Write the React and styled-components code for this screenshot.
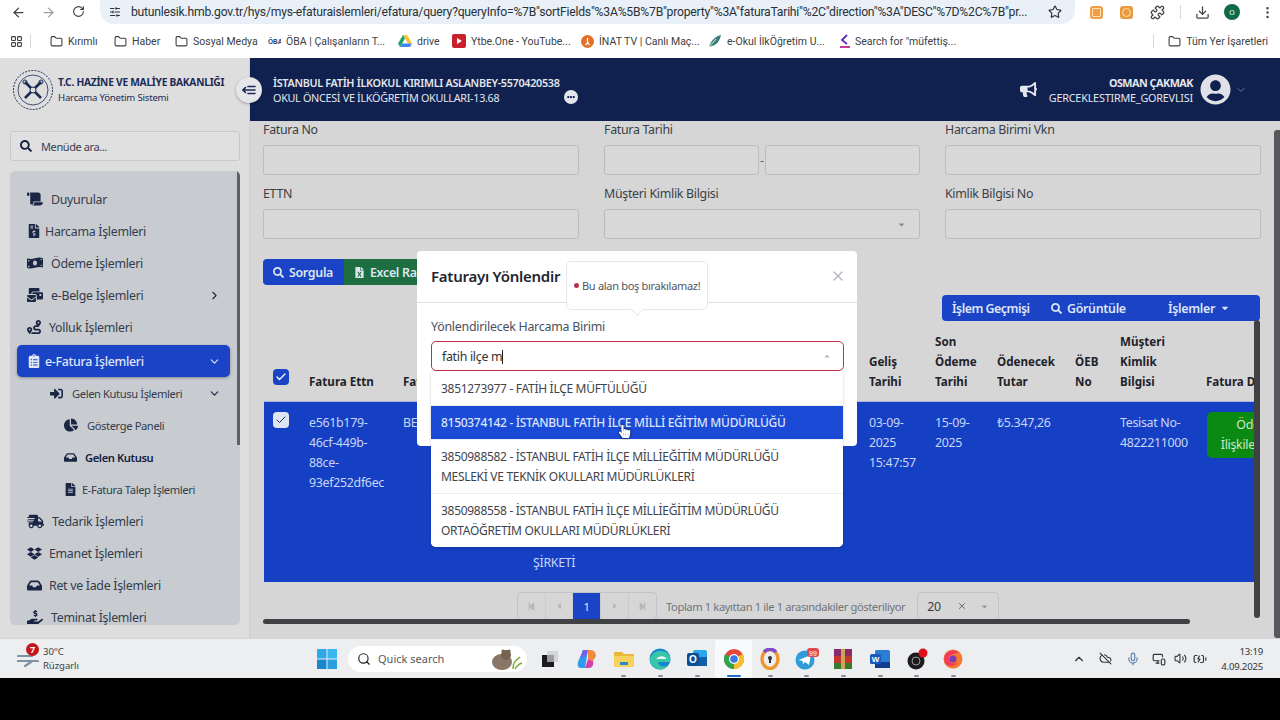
import React from "react";
import styled, { createGlobalStyle } from "styled-components";
import {
  FaScroll, FaFileInvoiceDollar, FaMoneyBillWave, FaMailBulk, FaRoute, FaClipboardList, FaSignInAlt,
  FaChartPie, FaInbox, FaFileAlt, FaShippingFast, FaDropbox, FaHandHoldingUsd, FaBullhorn, FaUserCircle,
  FaSearch, FaFileExcel, FaEllipsisH, FaStepBackward, FaStepForward, FaCaretLeft, FaCaretRight,
  FaCaretDown, FaCaretUp, FaHandPointer,
} from "react-icons/fa";
import {
  ArrowLeft, ArrowRight, RotateCw, Star, Puzzle, Download, EllipsisVertical, Folder, LayoutGrid,
  SlidersHorizontal, ChevronRight, ChevronDown, ChevronUp, X, Search, Mic, Volume2, CloudOff, MonitorSmartphone,
  BatteryCharging, Check as CheckMark,
} from "lucide-react";

const APP_FONT = `"Noto Sans", "Liberation Sans", sans-serif`;
const CHROME_FONT = `Roboto, "Liberation Sans", sans-serif`;

const GlobalStyle = createGlobalStyle`
  html, body { margin: 0; padding: 0; background: #000; }
  * { box-sizing: border-box; }
  body { font-family: ${APP_FONT}; }
`;

const Page = styled.div`
  width: 1280px;
  height: 720px;
  overflow: hidden;
  display: flex;
  flex-direction: column;
  background: #000;
`;

/* browser chrome */
const Toolbar = styled.div`
  height: 24px;
  background: #fff;
  display: flex;
  align-items: center;
  color: #444;
  font-family: ${CHROME_FONT};
`;

const NavButton = styled.div`
  width: 30px;
  display: flex;
  justify-content: center;
  color: ${p => (p.$off ? "#9aa0a6" : "#3c4043")};
`;

const Nav = styled.div`
  display: flex;
  padding-left: 3px;
  width: 100px;
`;

const UrlBar = styled.div`
  width: 975px;
  height: 24px;
  background: #e9f0f8;
  border-radius: 0 0 14px 14px;
  display: flex;
  align-items: center;
  padding: 0 13px 0 7px;
  gap: 9px;
  font-size: 12.2px;
  color: #2b3138;
`;

const UrlSite = styled.div`
  width: 15px;
  display: flex;
  justify-content: center;
`;

const UrlText = styled.div`
  flex: 1;
  white-space: nowrap;
  overflow: hidden;
  letter-spacing: -0.23px;
`;

const ToolIcons = styled.div`
  flex: 1;
  display: flex;
  align-items: center;
  padding-left: 15px;
`;

const ExtIcon = styled.div`
  width: 13px;
  height: 13px;
  border-radius: 3px;
  background: ${p => p.$color};
  margin-right: 17px;
  display: flex;
  align-items: center;
  justify-content: center;
  &::after {
    content: "";
    width: 7px;
    height: 7px;
    border-radius: ${p => (p.$round ? "50%" : "1px")};
    border: 1px solid #fbe3c4;
  }
`;

const ToolSep = styled.div`
  width: 1px;
  height: 14px;
  background: #d5d8dc;
  margin: 0 14px 0 15px;
`;

const Avatar = styled.div`
  width: 16px;
  height: 16px;
  border-radius: 50%;
  background: #0f6b45;
  color: #dff;
  font-size: 8px;
  display: flex;
  align-items: center;
  justify-content: center;
  margin: 0 20px 0 14px;
`;

const Bookmarks = styled.div`
  height: 34px;
  background: #fff;
  display: flex;
  align-items: center;
  padding-left: 10px;
  font-family: ${CHROME_FONT};
  font-size: 10.5px;
  color: #3c4043;
`;

const Mark = styled.div`
  display: flex;
  align-items: center;
  gap: 5px;
  width: ${p => p.$w}px;
  flex: none;
  white-space: nowrap;
`;

const BookmarkSep = styled.div`
  width: 1px;
  height: 14px;
  background: #d5d8dc;
  margin: 0 ${p => p.$right}px 0 ${p => p.$left}px;
`;

const BookmarkEnd = styled(Mark)`
  margin-left: auto;
  margin-right: 12px;
  width: auto;
`;

/* application */
const Body = styled.div`
  position: relative;
  height: 580px;
  display: flex;
  background: #d6d6d6;
  overflow: hidden;
`;

const Sidebar = styled.aside`
  width: 250px;
  flex: none;
  background: #dedede;
  display: flex;
  flex-direction: column;
  border-right: 1px solid #cfcfcf;
`;

const Brand = styled.div`
  height: 63px;
  padding: 11px 0 0 12px;
  display: flex;
  gap: 4px;
`;

const BrandText = styled.div`
  padding-top: 5px;
  color: #1b2a55;
`;

const BrandTitle = styled.div`
  font-size: 10.2px;
  font-weight: 700;
  line-height: 16px;
  white-space: nowrap;
  letter-spacing: -0.25px;
`;

const BrandSub = styled.div`
  font-size: 9.6px;
  line-height: 15px;
  letter-spacing: -0.2px;
`;

const MenuSearch = styled.div`
  margin: 10px 9px 10px 10px;
  height: 30px;
  border: 1px solid #c5c8cc;
  border-radius: 3px;
  display: flex;
  align-items: center;
  gap: 9px;
  padding-left: 9px;
  font-size: 11px;
  letter-spacing: -0.4px;
  color: #39414f;
  background: #e0e0e0;
`;

const MenuCard = styled.nav`
  position: relative;
  margin: 0 9px 0 10px;
  height: 454px;
  background: #c8ccd1;
  border-radius: 5px;
  padding-top: 12px;
  overflow: hidden;
`;

const MenuThumb = styled.div`
  position: absolute;
  top: 0;
  right: 0;
  width: 3px;
  height: 274px;
  background: #5d6167;
`;

const MenuItem = styled.div`
  height: 32px;
  display: flex;
  align-items: center;
  gap: ${p => p.$gap}px;
  margin: ${p => (p.$active ? "2px 10px 0 7px" : "0 10px 0 7px")};
  padding: 0 9px 0 ${p => 10 + p.$level * 14 + (p.$level ? 9 : 0)}px;
  border-radius: 5px;
  font-size: 12.4px;
  letter-spacing: -0.3px;
  font-weight: ${p => (p.$active ? 500 : p.$bold ? 600 : 400)};
  color: ${p => (p.$active ? "#dfe6f7" : p.$bold ? "#14203f" : "#333c4c")};
  background: ${p => (p.$active ? "#1a43c6" : "transparent")};
  box-shadow: ${p => (p.$active ? "0 1px 3px rgba(0,0,0,.35)" : "none")};
  white-space: nowrap;
  svg { flex: none; color: ${p => (p.$active ? "#dfe6f7" : "#1b2645")}; }
`;

const MenuChevron = styled.span`
  margin-left: auto;
  display: flex;
`;

const SmallLabel = styled.span`
  font-size: ${p => (p.$small ? "11.2px" : "inherit")};
  letter-spacing: ${p => (p.$small ? "-0.4px" : "inherit")};
`;

const Content = styled.main`
  position: relative;
  flex: 1;
  min-width: 0;
  display: flex;
  flex-direction: column;
`;

const TopBar = styled.header`
  height: 63px;
  flex: none;
  background: #10214f;
  display: flex;
  align-items: center;
  padding: 0 33px 0 23px;
  color: #e3e6ec;
`;

const Unit = styled.div`
  flex: 1;
  font-size: 10.8px;
  line-height: 15px;
  letter-spacing: -0.3px;
`;

const UnitLine = styled.div`
  display: flex;
  align-items: center;
  font-weight: ${p => (p.$bold ? 600 : 400)};
`;

const DotsBadge = styled.span`
  position: absolute;
  left: 314px;
  top: 32px;
  width: 14px;
  height: 14px;
  border-radius: 50%;
  background: #e3e6ec;
  color: #10214f;
  display: flex;
  align-items: center;
  justify-content: center;
`;

const UserBlock = styled.div`
  text-align: right;
  font-size: 10.8px;
  line-height: 15px;
  margin: 0 7px 0 6px;
  width: 150px;
  letter-spacing: -0.2px;
`;

const UserName = styled.div`
  font-weight: 700;
  letter-spacing: -0.5px;
`;

const Inner = styled.div`
  padding: 1px 20px 0 13px;
  font-size: 12.4px;
  letter-spacing: -0.3px;
  color: #3a3f47;
`;

const FilterGrid = styled.div`
  display: grid;
  grid-template-columns: repeat(3, 316px);
  column-gap: 25px;
  row-gap: 11px;
`;

const Field = styled.div``;

const FieldLabel = styled.div`
  height: 16px;
  line-height: 16px;
  margin-bottom: 7px;
  white-space: nowrap;
`;

const Input = styled.div`
  height: 30px;
  border: 1px solid #b9bcc0;
  border-radius: 3px;
  background: #d8d8d8;
  display: flex;
  align-items: center;
  justify-content: flex-end;
  padding-right: 13px;
  color: #8a8a8a;
`;

const DateRange = styled.div`
  display: flex;
  align-items: center;
  gap: 1px;
  color: #666;
  ${Input} { width: 155px; }
`;

const ActionRow = styled.div`
  display: flex;
  margin-top: 20px;
`;

const Button = styled.div`
  height: 26px;
  width: ${p => p.$w}px;
  background: ${p => p.$color};
  border-radius: ${p => p.$radius};
  color: #dfe6f2;
  font-weight: 600;
  display: flex;
  align-items: center;
  gap: 5px;
  padding-left: 10px;
  white-space: nowrap;
  overflow: hidden;
`;

const RecordTools = styled.div`
  width: 318px;
  height: 26px;
  margin: 10px 0 0 auto;
  background: #1a43c6;
  border-radius: 4px;
  display: flex;
  align-items: center;
  color: #dfe6f7;
  font-weight: 600;
`;

const RecordTool = styled.div`
  display: flex;
  align-items: center;
  gap: 5px;
  width: ${p => p.$w}px;
  padding-left: ${p => p.$pad}px;
  white-space: nowrap;
  letter-spacing: ${p => (p.$tight ? "-0.5px" : "inherit")};
`;

const TableScroll = styled.div`
  width: 991px;
  margin-top: 10px;
  margin-left: 1px;
  overflow: hidden;
`;

const Row = styled.div`
  display: grid;
  grid-template-columns: 35px 94px 130px 336px 66px 62px 78px 45px 86px 58px;
  line-height: 20px;
`;

const HeadRow = styled(Row)`
  height: 71px;
  color: #1e232b;
  font-weight: 700;
  font-size: 11.6px;
  letter-spacing: 0;
  border-bottom: 1px solid #a9b8dc;
`;

const BodyRow = styled(Row)`
  height: 180px;
  background: #1540c4;
  color: #c9d6f5;
`;

const HeadCell = styled.div`
  align-self: end;
  padding: 0 0 ${p => (p.$check ? 16 : 9)}px ${p => (p.$check ? 9 : 10)}px;
  white-space: ${p => (p.$nowrap ? "nowrap" : "normal")};
`;

const BodyCell = styled.div`
  padding: ${p => (p.$check ? "10px 0 0 9px" : "11px 0 0 10px")};
  white-space: pre-line;
  ${p => p.$end && "align-self: end; padding: 0 0 9px 10px;"}
  min-width: 0;
`;

const Check = styled.div`
  width: 16px;
  height: 16px;
  border-radius: 4px;
  background: ${p => (p.$light ? "#dfe4f3" : "#1a43c6")};
  color: ${p => (p.$light ? "#1a2a66" : "#fff")};
  display: flex;
  align-items: center;
  justify-content: center;
`;

const StatusPill = styled.div`
  width: 100px;
  height: 46px;
  margin: -1px 0 0 1px;
  background: #0a8a12;
  border-radius: 5px;
  color: #cfe8cf;
  text-align: center;
  padding: 3px 0;
  white-space: nowrap;
`;

const Pager = styled.div`
  display: flex;
  align-items: center;
  margin: 10px 0 0 254px;
  font-size: 11.2px;
  letter-spacing: -0.4px;
  color: #70757c;
  white-space: nowrap;
`;

const PagerGroup = styled.div`
  display: flex;
  height: 28px;
  border: 1px solid #c2c4c7;
  border-radius: 4px;
  overflow: hidden;
  margin-right: 9px;
`;

const PagerCell = styled.div`
  width: ${p => (p.$narrow ? 27 : 28)}px;
  display: flex;
  align-items: center;
  justify-content: center;
  color: ${p => (p.$active ? "#e8edf9" : "#b5b7ba")};
  background: ${p => (p.$active ? "#1a43c6" : "transparent")};
  border-left: ${p => (p.$first ? "none" : "1px solid #c9cbce")};
`;

const PageSize = styled.div`
  width: 82px;
  height: 28px;
  margin-left: 12px;
  border: 1px solid #c2c4c7;
  border-radius: 4px;
  display: flex;
  align-items: center;
  padding-left: 9px;
  font-size: 12.4px;
  color: #3a3f47;
`;

const SizeClear = styled.span`
  margin-left: 16px;
  display: flex;
  color: #555;
`;

const SizeCaret = styled.span`
  margin-left: 13px;
  display: flex;
  color: #999;
`;

const HScroll = styled.div`
  position: absolute;
  left: 13px;
  top: 561px;
  width: 927px;
  height: 5px;
  background: #3f4145;
  border-radius: 3px;
`;

const VScroll = styled.div`
  position: absolute;
  left: 1004px;
  top: 262px;
  width: 6px;
  height: 298px;
  background: #3f4145;
  border-radius: 3px;
`;

const PageThumb = styled.div`
  position: absolute;
  right: 0;
  top: 72px;
  width: 6px;
  bottom: 0;
  background: #55585c;
  border-radius: 3px 0 0 3px;
`;

const SideToggle = styled.div`
  position: absolute;
  left: 236px;
  top: 19px;
  width: 26px;
  height: 26px;
  border-radius: 50%;
  background: #e4e6ea;
  box-shadow: 0 1px 3px rgba(0, 0, 0, 0.3);
  display: flex;
  align-items: center;
  justify-content: center;
  color: #1b2a55;
`;

/* dialog */
const Dialog = styled.div`
  position: absolute;
  left: 417px;
  top: 193px;
  width: 440px;
  height: 195px;
  background: #fff;
  border-radius: 4px;
`;

const DialogHead = styled.div`
  height: 52px;
  border-bottom: 1px solid #dde0e5;
  display: flex;
  align-items: center;
  justify-content: space-between;
  padding: 0 11px 2px 14px;
  font-size: 15px;
  letter-spacing: -0.25px;
  font-weight: 600;
  color: #1f2530;
`;

const DialogBody = styled.div`
  padding: 15px 13px 0 14px;
  font-size: 12.4px;
  color: #4a505a;
`;

const SelectLabel = styled.div`
  line-height: 18px;
  margin-bottom: 5px;
  letter-spacing: -0.25px;
`;

const Select = styled.div`
  height: 30px;
  border: 1px solid #c22f47;
  border-radius: 5px;
  display: flex;
  align-items: center;
  justify-content: space-between;
  padding: 0 12px 0 10px;
  color: #333;
  letter-spacing: -0.3px;
`;

const Caret = styled.span`
  width: 1px;
  height: 14px;
  background: #222;
  display: inline-block;
  vertical-align: middle;
`;

const Popover = styled.div`
  position: absolute;
  left: 149px;
  top: 10px;
  width: 142px;
  height: 49px;
  background: #fff;
  border: 1px solid #e6e8ec;
  border-radius: 5px;
  display: flex;
  align-items: center;
  gap: 3px;
  padding: 0 0 0 7px;
  font-size: 11px;
  color: #50555e;
  white-space: nowrap;
  letter-spacing: -0.3px;
  &::after {
    content: "";
    position: absolute;
    left: 66px;
    bottom: -5px;
    width: 8px;
    height: 8px;
    background: #fff;
    transform: rotate(45deg);
    border-right: 1px solid #e6e8ec;
    border-bottom: 1px solid #e6e8ec;
  }
`;

const ErrorDot = styled.span`
  width: 5px;
  height: 5px;
  border-radius: 50%;
  background: #b4344a;
  flex: none;
`;

const Options = styled.div`
  position: absolute;
  left: 14px;
  top: 120px;
  width: 412px;
  background: #fff;
  border-radius: 0 0 5px 5px;
  box-shadow: 0 1px 3px rgba(0, 0, 0, 0.2);
  font-size: 12px;
  letter-spacing: -0.3px;
  line-height: 20px;
  overflow: hidden;
`;

const Option = styled.div`
  padding: 7px 10px;
  height: ${p => p.$h}px;
  background: ${p => (p.$active ? "#1a4ad6" : "#fff")};
  color: ${p => (p.$active ? "#dbe4fa" : "#3f444c")};
  font-weight: ${p => (p.$active ? 500 : 400)};
  border-bottom: 1px solid #eceef0;
  white-space: pre-line;
  &:first-child { padding-top: 8px; }
  &:last-child { border-bottom: none; }
`;

const Pointer = styled.div`
  position: absolute;
  left: 618px;
  top: 367px;
  color: #fff;
  filter: drop-shadow(0 0 1px #000);
  display: flex;
`;

/* taskbar */
const Taskbar = styled.div`
  height: 40px;
  background: #eceef0;
  border-top: 1px solid #d5d6d8;
  display: flex;
  align-items: center;
  color: #3c3f44;
`;

const Weather = styled.div`
  width: 316px;
  display: flex;
  align-items: center;
  padding-left: 17px;
  gap: 4px;
  position: relative;
`;

const WeatherText = styled.div`
  font-size: 9.6px;
  line-height: 14px;
  letter-spacing: -0.1px;
`;

const WeatherBadge = styled.span`
  position: absolute;
  left: 26px;
  top: -2px;
  width: 13px;
  height: 13px;
  border-radius: 50%;
  background: #c5161c;
  color: #fff;
  font-size: 9px;
  font-weight: 700;
  display: flex;
  align-items: center;
  justify-content: center;
`;

const TaskIcon = styled.div`
  position: relative;
  width: ${p => p.$w || 36.6}px;
  height: 38px;
  display: flex;
  align-items: center;
  justify-content: center;
  background: ${p => (p.$active ? "#f9fafb" : "transparent")};
  border-radius: 3px;
  &::after {
    content: "";
    display: ${p => (p.$open ? "block" : "none")};
    position: absolute;
    bottom: 1px;
    left: 50%;
    width: ${p => (p.$active ? 14 : 5)}px;
    height: 2px;
    margin-left: ${p => (p.$active ? -7 : -2.5)}px;
    border-radius: 1px;
    background: ${p => (p.$active ? "#1f6fc4" : "#8a8d91")};
  }
`;

const TaskSearch = styled.div`
  width: 179px;
  height: 26px;
  margin: 0 3px 0 10px;
  background: #fff;
  border-radius: 13px;
  display: flex;
  align-items: center;
  gap: 7px;
  padding-left: 9px;
  font-size: 11px;
  color: #55585c;
`;

const SearchArt = styled.span`
  margin-left: auto;
  margin-right: 4px;
  display: flex;
`;

const Tray = styled.div`
  margin-left: auto;
  display: flex;
  align-items: center;
  color: #33363a;
`;

const TraySlot = styled.div`
  width: ${p => p.$w}px;
  display: flex;
  justify-content: center;
`;

const Clock = styled.div`
  width: 47px;
  margin: 0 17px 0 6px;
  text-align: right;
  font-size: 9.6px;
  line-height: 15px;
  letter-spacing: -0.2px;
`;

const BottomBlack = styled.div`
  flex: 1;
  background: #000;
`;

/* drawings */
const Emblem = () => (
  <svg width="42" height="42" viewBox="0 0 42 42" fill="none" stroke="#1b2a55">
    <circle cx="21" cy="21" r="19.5" strokeWidth="1" strokeDasharray="2 1.2" />
    <circle cx="21" cy="21" r="15" strokeWidth="0.8" />
    <path d="M13 13 L29 29 M29 13 L13 29" strokeWidth="2.6" />
    <circle cx="21" cy="21" r="3" strokeWidth="1" fill="#dedede" />
    <circle cx="13" cy="13" r="2" strokeWidth="1" />
    <circle cx="29" cy="13" r="2" strokeWidth="1" />
  </svg>
);

const CollapseGlyph = () => (
  <svg width="14" height="12" viewBox="0 0 14 12" fill="none" stroke="currentColor" strokeWidth="1.6" strokeLinecap="round">
    <path d="M6 2.5h7M1 6h12M6 9.5h7M3.5 3.5 1 6l2.5 2.5" />
  </svg>
);

const WindowsLogo = () => (
  <svg width="20" height="20" viewBox="0 0 20 20">
    <rect x="0" y="0" width="9.5" height="9.5" fill="#2fa8e6" />
    <rect x="10.5" y="0" width="9.5" height="9.5" fill="#3cb6ee" />
    <rect x="0" y="10.5" width="9.5" height="9.5" fill="#1a86d0" />
    <rect x="10.5" y="10.5" width="9.5" height="9.5" fill="#2b9fe0" />
  </svg>
);

const Bear = () => (
  <svg width="34" height="22" viewBox="0 0 34 22">
    <ellipse cx="13" cy="14" rx="10" ry="8" fill="#8a7666" />
    <circle cx="17" cy="7" r="5" fill="#75624f" />
    <circle cx="14" cy="3" r="1.6" fill="#75624f" />
    <circle cx="20" cy="3" r="1.6" fill="#75624f" />
    <path d="M24 21 C24 14 27 12 31 9 M26 21 C28 17 30 16 33 15" stroke="#7fae3c" strokeWidth="1.5" fill="none" />
  </svg>
);

const WindowsApp = () => (
  <svg width="16" height="16" viewBox="0 0 16 16">
    <rect x="5" y="0" width="11" height="11" fill="#d4d5d7" />
    <rect x="0" y="4" width="12" height="12" fill="#1c1c1e" />
    <rect x="5" y="4" width="7" height="7" fill="#9b9c9e" />
  </svg>
);

const Copilot = () => (
  <svg width="20" height="20" viewBox="0 0 20 20">
    <path d="M6 1h5L8 19H4C1 19 0 16 1 13Z" fill="#2f9bf0" />
    <path d="M11 1h3c3 0 5 3 5 6l-3 5-5-2Z" fill="#f08a3c" />
    <path d="M8 19l3-9 5 2c1 4-1 7-4 7Z" fill="#d63fa8" />
    <path d="M6 1h5L9 7 4 9Z" fill="#7b5cf0" />
  </svg>
);

const FolderApp = () => (
  <svg width="22" height="20" viewBox="0 0 22 20">
    <path d="M1 3h8l2 2h10v13H1Z" fill="#e8b93a" />
    <rect x="1" y="7" width="20" height="11" fill="#f6d35c" />
    <rect x="7" y="13" width="8" height="3" fill="#2a88cf" />
  </svg>
);

const Edge = () => (
  <svg width="22" height="22" viewBox="0 0 22 22">
    <circle cx="11" cy="11" r="10.5" fill="#1b86d0" />
    <path d="M1 11C3 3 12 1 18 5c3 2 4 6 3 9H9c0 4 5 6 10 3-4 6-11 5-14 2-3-2-4-5-4-8Z" fill="#37c6a8" />
    <path d="M7 12c1-4 7-5 10-2v1H8Z" fill="#e8f6f4" />
  </svg>
);

const Outlook = () => (
  <svg width="22" height="20" viewBox="0 0 22 20">
    <rect x="7" y="1" width="14" height="15" rx="2" fill="#28a8ea" />
    <rect x="12" y="8" width="9" height="9" fill="#0f5ea8" />
    <rect x="1" y="4" width="12" height="13" rx="2" fill="#0a4f96" />
    <text x="7" y="14" textAnchor="middle" fontSize="10" fontWeight="700" fill="#fff" fontFamily="Liberation Sans">O</text>
  </svg>
);

const Chrome = () => (
  <svg width="20" height="20" viewBox="0 0 20 20">
    <circle cx="10" cy="10" r="10" fill="#e8483a" />
    <path d="M10 10 L1.3 5 A10 10 0 0 0 10 20 Z" fill="#2fa44f" />
    <path d="M10 10 L18.7 5 A10 10 0 0 1 10 20 Z" fill="#f3c02c" />
    <circle cx="10" cy="10" r="5" fill="#fff" />
    <circle cx="10" cy="10" r="3.8" fill="#3a78e8" />
  </svg>
);

const Opera = () => (
  <svg width="20" height="22" viewBox="0 0 20 22">
    <ellipse cx="10" cy="11" rx="8" ry="9.5" fill="none" stroke="#f0962e" strokeWidth="3.4" />
    <path d="M4 4C7 .5 13 .5 16 4" fill="none" stroke="#7e4bd0" strokeWidth="3.4" />
    <circle cx="10" cy="10" r="2" fill="#333" />
    <rect x="9" y="10" width="2" height="5" fill="#333" />
  </svg>
);

const Telegram = () => (
  <svg width="24" height="22" viewBox="0 0 24 22">
    <circle cx="10" cy="12" r="9.5" fill="#2f9bd8" />
    <path d="M3.5 12 16 7l-2 10-4-3-2 2-.5-3Z" fill="#fff" />
    <rect x="12" y="0" width="12" height="9" rx="3" fill="#e0474c" />
    <text x="18" y="7.5" textAnchor="middle" fontSize="7" fill="#fff" fontFamily="Liberation Sans">99</text>
  </svg>
);

const Winrar = () => (
  <svg width="18" height="20" viewBox="0 0 18 20">
    <rect width="18" height="7" fill="#8a2a6a" />
    <rect y="7" width="18" height="7" fill="#c2362e" />
    <rect y="14" width="18" height="6" fill="#3a7a2e" />
    <rect x="7" width="4" height="20" fill="#c9a35a" />
  </svg>
);

const Word = () => (
  <svg width="20" height="20" viewBox="0 0 20 20">
    <rect x="5" y="1" width="15" height="18" rx="1.5" fill="#2b7cd3" />
    <rect x="5" y="13" width="15" height="6" fill="#103f91" />
    <rect x="0" y="5" width="11" height="10" rx="1.5" fill="#185abd" />
    <text x="5.5" y="13" textAnchor="middle" fontSize="8" fontWeight="700" fill="#fff" fontFamily="Liberation Sans">W</text>
  </svg>
);

const Obs = () => (
  <svg width="22" height="22" viewBox="0 0 22 22">
    <circle cx="10" cy="13" r="8.5" fill="#1c1c1e" />
    <circle cx="10" cy="13" r="4" fill="none" stroke="#9a9a9a" strokeWidth="1" />
    <circle cx="17" cy="5" r="4.5" fill="#e0101c" />
  </svg>
);

const Firefox = () => (
  <svg width="20" height="20" viewBox="0 0 20 20">
    <circle cx="10" cy="10" r="9.5" fill="#f5792a" />
    <path d="M2 6C5 1 13 0 17 4c-3-1-4 0-5 1-4 0-6 2-6 5 0 4 5 6 9 3-3 5-10 5-13 1C1 11 1 8 2 6Z" fill="#f23a5e" />
    <circle cx="10" cy="10" r="3.5" fill="#7c3ab8" />
  </svg>
);

const Wind = () => (
  <svg width="22" height="18" viewBox="0 0 22 18" fill="none" stroke="#7f93a8" strokeWidth="2.2" strokeLinecap="round">
    <path d="M1 6h14M1 11h20M8 16l6-4" />
  </svg>
);

const OBA = () => (
  <svg width="13" height="9" viewBox="0 0 13 9">
    <text x="0" y="7" fontSize="6.5" fontWeight="700" fill="#20427a" fontFamily="Liberation Sans">ÖBA</text>
  </svg>
);

const Drive = () => (
  <svg width="14" height="13" viewBox="0 0 14 13">
    <path d="M5 0h4l5 8.5H10Z" fill="#f7c22e" />
    <path d="M5 0 0 8.5l2 3.5L7 3.5Z" fill="#1fa463" />
    <path d="M2 12h10l2-3.5H4Z" fill="#4285f4" />
  </svg>
);

const Ytbe = () => (
  <svg width="14" height="14" viewBox="0 0 14 14">
    <rect width="14" height="14" rx="2" fill="#c8202c" />
    <path d="M5 4l5 3-5 3Z" fill="#fff" />
  </svg>
);

const Inat = () => (
  <svg width="13" height="13" viewBox="0 0 13 13">
    <circle cx="6.5" cy="6.5" r="6.5" fill="#e2702a" />
    <path d="M6.5 3v5l-2 2M6.5 7l2 3" stroke="#fff" strokeWidth="1.2" fill="none" />
  </svg>
);

const Eokul = () => (
  <svg width="14" height="14" viewBox="0 0 14 14">
    <path d="M1 13 C3 6 8 2 13 1 C12 6 9 11 4 12Z" fill="#3d7f78" />
    <path d="M1 13 8 5" stroke="#fff" strokeWidth=".8" />
  </svg>
);

const Kmark = () => (
  <svg width="10" height="14" viewBox="0 0 10 14" fill="none">
    <path d="M7 1 2 6l5 4" stroke="#5a2bc0" strokeWidth="1.8" />
    <path d="M0 13h10" stroke="#c0218c" strokeWidth="1.8" />
  </svg>
);

const menu = [
  { icon: FaScroll, label: "Duyurular", size: 16, gap: 8 },
  { icon: FaFileInvoiceDollar, label: "Harcama İşlemleri", size: 14, gap: 4 },
  { icon: FaMoneyBillWave, label: "Ödeme İşlemleri", size: 16, gap: 8 },
  { icon: FaMailBulk, label: "e-Belge İşlemleri", size: 16, gap: 8, chevron: "right" },
  { icon: FaRoute, label: "Yolluk İşlemleri", size: 14, gap: 8 },
  { icon: FaClipboardList, label: "e-Fatura İşlemleri", size: 14, gap: 4, chevron: "down", active: true },
  { icon: FaSignInAlt, label: "Gelen Kutusu İşlemleri", size: 13, gap: 9, level: 1, chevron: "down", small: true },
  { icon: FaChartPie, label: "Gösterge Paneli", size: 14, gap: 9, level: 2, small: true },
  { icon: FaInbox, label: "Gelen Kutusu", size: 13, gap: 8, level: 2, bold: true, small: true },
  { icon: FaFileAlt, label: "E-Fatura Talep İşlemleri", size: 13, gap: 5, level: 2, small: true },
  { icon: FaShippingFast, label: "Tedarik İşlemleri", size: 17, gap: 8 },
  { icon: FaDropbox, label: "Emanet İşlemleri", size: 15, gap: 7 },
  { icon: FaInbox, label: "Ret ve İade İşlemleri", size: 15, gap: 7 },
  { icon: FaHandHoldingUsd, label: "Teminat İşlemleri", size: 16, gap: 8 },
];

const App = () => {
  return (
    <Page>
      <GlobalStyle />
      <Toolbar>
        <Nav>
          <NavButton><ArrowLeft size={15} /></NavButton>
          <NavButton $off><ArrowRight size={15} /></NavButton>
          <NavButton><RotateCw size={13} /></NavButton>
        </Nav>
        <UrlBar>
          <UrlSite><SlidersHorizontal size={12} /></UrlSite>
          <UrlText>butunlesik.hmb.gov.tr/hys/mys-efaturaislemleri/efatura/query?queryInfo=%7B"sortFields"%3A%5B%7B"property"%3A"faturaTarihi"%2C"direction"%3A"DESC"%7D%2C%7B"pr...</UrlText>
          <Star size={14} />
        </UrlBar>
        <ToolIcons>
          <ExtIcon $color="#f0a043" />
          <ExtIcon $color="#e89a3c" $round />
          <Puzzle size={15} />
          <ToolSep />
          <Download size={15} />
          <Avatar>O</Avatar>
          <EllipsisVertical size={15} />
        </ToolIcons>
      </Toolbar>
      <Bookmarks>
        <LayoutGrid size={13} />
        <BookmarkSep $left={7} $right={19} />
        <Mark $w={64}><Folder size={13} />Kırımlı</Mark>
        <Mark $w={61}><Folder size={13} />Haber</Mark>
        <Mark $w={93}><Folder size={13} />Sosyal Medya</Mark>
        <Mark $w={130}><OBA />ÖBA | Çalışanların T...</Mark>
        <Mark $w={54}><Drive />drive</Mark>
        <Mark $w={129}><Ytbe />Ytbe.One - YouTube...</Mark>
        <Mark $w={127}><Inat />İNAT TV | Canlı Maç...</Mark>
        <Mark $w={132}><Eokul />e-Okul İlkÖğretim U...</Mark>
        <Mark $w={120}><Kmark />Search for "müfettiş...</Mark>
        <BookmarkEnd><BookmarkSep $left={0} $right={9} /><Folder size={13} />Tüm Yer İşaretleri</BookmarkEnd>
      </Bookmarks>

      <Body>
        <Sidebar>
          <Brand>
            <Emblem />
            <BrandText>
              <BrandTitle>T.C. HAZİNE VE MALİYE BAKANLIĞI</BrandTitle>
              <BrandSub>Harcama Yönetim Sistemi</BrandSub>
            </BrandText>
          </Brand>
          <MenuSearch><FaSearch size={12} color="#1b2645" />Menüde ara...</MenuSearch>
          <MenuCard>
            {menu.map(item => {
              const Icon = item.icon;
              return (
                <MenuItem key={item.label} $active={item.active} $bold={item.bold} $level={item.level || 0} $gap={item.gap}>
                  <Icon size={item.size} />
                  <SmallLabel $small={item.small}>{item.label}</SmallLabel>
                  {item.chevron === "right" && <MenuChevron><ChevronRight size={13} /></MenuChevron>}
                  {item.chevron === "down" && <MenuChevron><ChevronDown size={13} /></MenuChevron>}
                </MenuItem>
              );
            })}
            <MenuThumb />
          </MenuCard>
        </Sidebar>

        <Content>
          <TopBar>
            <Unit>
              <UnitLine $bold>İSTANBUL FATİH İLKOKUL KIRIMLI ASLANBEY-5570420538</UnitLine>
              <UnitLine>OKUL ÖNCESİ VE İLKÖĞRETİM OKULLARI-13.68</UnitLine>
              <DotsBadge><FaEllipsisH size={8} /></DotsBadge>
            </Unit>
            <FaBullhorn size={17} />
            <UserBlock>
              <UserName>OSMAN ÇAKMAK</UserName>
              <div>GERCEKLESTIRME_GOREVLISI</div>
            </UserBlock>
            <FaUserCircle size={31} color="#dfe1e6" />
            <ChevronDown size={12} color="#6d7a99" style={{ marginLeft: 4 }} />
          </TopBar>
          <Inner>
            <FilterGrid>
              <Field><FieldLabel>Fatura No</FieldLabel><Input /></Field>
              <Field>
                <FieldLabel>Fatura Tarihi</FieldLabel>
                <DateRange><Input />-<Input /></DateRange>
              </Field>
              <Field><FieldLabel>Harcama Birimi Vkn</FieldLabel><Input /></Field>
              <Field><FieldLabel>ETTN</FieldLabel><Input /></Field>
              <Field><FieldLabel>Müşteri Kimlik Bilgisi</FieldLabel><Input><FaCaretDown size={9} /></Input></Field>
              <Field><FieldLabel>Kimlik Bilgisi No</FieldLabel><Input /></Field>
            </FilterGrid>
            <ActionRow>
              <Button $w={81} $color="#1a43c6" $radius="4px 0 0 4px"><FaSearch size={11} />Sorgula</Button>
              <Button $w={100} $color="#1d6f42" $radius="0"><FaFileExcel size={11} />Excel Rapor</Button>
            </ActionRow>
            <RecordTools>
              <RecordTool $w={100} $pad={10} $tight>İşlem Geçmişi</RecordTool>
              <RecordTool $w={117} $pad={9}><FaSearch size={11} />Görüntüle</RecordTool>
              <RecordTool $w={100} $pad={9}>İşlemler<FaCaretDown size={10} /></RecordTool>
            </RecordTools>
            <TableScroll>
              <HeadRow>
                <HeadCell $check><Check><CheckMark size={12} strokeWidth={2.5} /></Check></HeadCell>
                <HeadCell $nowrap>Fatura Ettn</HeadCell>
                <HeadCell $nowrap>Fatura No</HeadCell>
                <HeadCell />
                <HeadCell>Geliş<br />Tarihi</HeadCell>
                <HeadCell>Son<br />Ödeme<br />Tarihi</HeadCell>
                <HeadCell>Ödenecek<br />Tutar</HeadCell>
                <HeadCell>ÖEB<br />No</HeadCell>
                <HeadCell>Müşteri<br />Kimlik<br />Bilgisi</HeadCell>
                <HeadCell $nowrap>Fatura Durumu</HeadCell>
              </HeadRow>
              <BodyRow>
                <BodyCell $check><Check $light><CheckMark size={12} strokeWidth={2} /></Check></BodyCell>
                <BodyCell>{"e561b179-\n46cf-449b-\n88ce-\n93ef252df6ec"}</BodyCell>
                <BodyCell>BE</BodyCell>
                <BodyCell $end>ŞİRKETİ</BodyCell>
                <BodyCell>{"03-09-\n2025\n15:47:57"}</BodyCell>
                <BodyCell>{"15-09-\n2025"}</BodyCell>
                <BodyCell>₺5.347,26</BodyCell>
                <BodyCell />
                <BodyCell>{"Tesisat No-\n4822211000"}</BodyCell>
                <BodyCell>
                  <StatusPill>Ödeme<br />İlişkilendirildi</StatusPill>
                </BodyCell>
              </BodyRow>
            </TableScroll>
            <Pager>
              <PagerGroup>
                <PagerCell $first $narrow><FaStepBackward size={9} /></PagerCell>
                <PagerCell $narrow><FaCaretLeft size={10} /></PagerCell>
                <PagerCell $active>1</PagerCell>
                <PagerCell><FaCaretRight size={10} /></PagerCell>
                <PagerCell><FaStepForward size={9} /></PagerCell>
              </PagerGroup>
              Toplam 1 kayıttan 1 ile 1 arasındakiler gösteriliyor
              <PageSize>
                20
                <SizeClear><X size={10} /></SizeClear>
                <SizeCaret><FaCaretDown size={9} /></SizeCaret>
              </PageSize>
            </Pager>
          </Inner>
          <HScroll />
          <VScroll />
          <PageThumb />
        </Content>

        <SideToggle><CollapseGlyph /></SideToggle>

        <Dialog>
          <DialogHead>
            Faturayı Yönlendir
            <X size={16} color="#b3b8c2" />
          </DialogHead>
          <DialogBody>
            <SelectLabel>Yönlendirilecek Harcama Birimi</SelectLabel>
            <Select>
              <span>fatih ilçe m<Caret /></span>
              <FaCaretUp size={8} color="#b0b4ba" />
            </Select>
          </DialogBody>
          <Popover><ErrorDot />Bu alan boş bırakılamaz!</Popover>
          <Options>
            <Option $h={35}>3851273977 - FATİH İLÇE MÜFTÜLÜĞÜ</Option>
            <Option $h={34} $active>8150374142 - İSTANBUL FATİH İLÇE MİLLİ EĞİTİM MÜDÜRLÜĞÜ</Option>
            <Option $h={54}>{"3850988582 - İSTANBUL FATİH İLÇE MİLLİEĞİTİM MÜDÜRLÜĞÜ\nMESLEKİ VE TEKNİK OKULLARI MÜDÜRLÜKLERİ"}</Option>
            <Option $h={53}>{"3850988558 - İSTANBUL FATİH İLÇE MİLLİEĞİTİM MÜDÜRLÜĞÜ\nORTAÖĞRETİM OKULLARI MÜDÜRLÜKLERİ"}</Option>
          </Options>
        </Dialog>
        <Pointer><FaHandPointer size={13} /></Pointer>
      </Body>

      <Taskbar>
        <Weather>
          <Wind />
          <WeatherBadge>7</WeatherBadge>
          <WeatherText>30°C<br />Rüzgarlı</WeatherText>
        </Weather>
        <TaskIcon $w={22}><WindowsLogo /></TaskIcon>
        <TaskSearch>
          <Search size={14} color="#222" />
          Quick search
          <SearchArt><Bear /></SearchArt>
        </TaskSearch>
        <TaskIcon $w={39}><WindowsApp /></TaskIcon>
        <TaskIcon><Copilot /></TaskIcon>
        <TaskIcon $open><FolderApp /></TaskIcon>
        <TaskIcon $open><Edge /></TaskIcon>
        <TaskIcon $open><Outlook /></TaskIcon>
        <TaskIcon $open $active><Chrome /></TaskIcon>
        <TaskIcon $open><Opera /></TaskIcon>
        <TaskIcon $open><Telegram /></TaskIcon>
        <TaskIcon $open><Winrar /></TaskIcon>
        <TaskIcon $open><Word /></TaskIcon>
        <TaskIcon $open><Obs /></TaskIcon>
        <TaskIcon $open><Firefox /></TaskIcon>
        <Tray>
          <TraySlot $w={27}><ChevronUp size={14} /></TraySlot>
          <TraySlot $w={27}><CloudOff size={13} /></TraySlot>
          <TraySlot $w={27}><Mic size={14} color="#5b7fb0" /></TraySlot>
          <TraySlot $w={25}><MonitorSmartphone size={14} /></TraySlot>
          <TraySlot $w={19}><Volume2 size={13} /></TraySlot>
          <TraySlot $w={20}><BatteryCharging size={14} /></TraySlot>
          <Clock>13:19<br />4.09.2025</Clock>
        </Tray>
      </Taskbar>
      <BottomBlack />
    </Page>
  );
};

export default App;
